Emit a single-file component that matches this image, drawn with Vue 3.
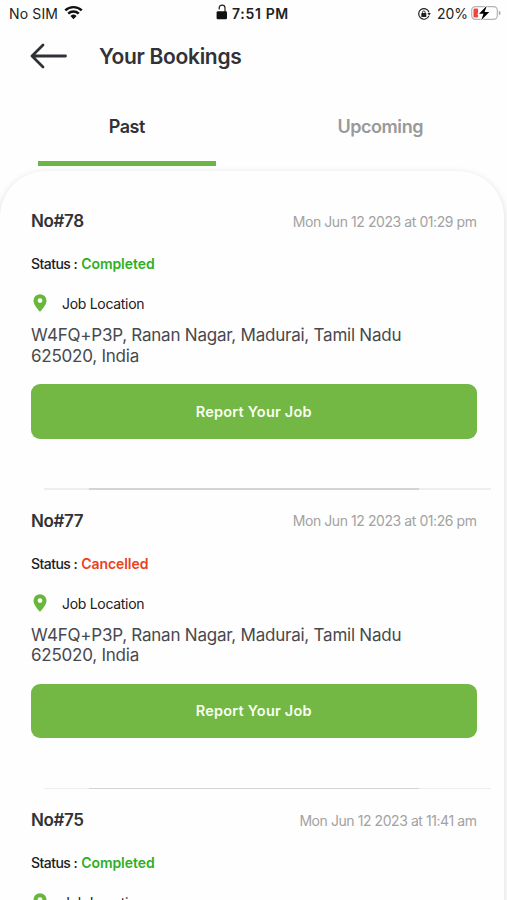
<template>
  <div class="screen">
    <div class="status-bar">
      <div class="carrier">
        <span>No SIM</span>
        <svg class="wifi" viewBox="0 0 18 14">
          <path d="M1.2 5.1a11.2 11.2 0 0 1 15.6 0M4 8.1a7.2 7.2 0 0 1 10 0" fill="none" stroke="#111" stroke-width="2.3" />
          <path d="M6.1 10.3a4.2 4.2 0 0 1 5.8 0L9 13.3z" fill="#111" />
        </svg>
      </div>
      <div class="clock">
        <svg class="lock" viewBox="0 0 12 16">
          <path d="M3.2 5.4V4a2.9 2.9 0 0 1 5.8 0v4" fill="none" stroke="#222" stroke-width="1.2" />
          <rect x="0.6" y="7.2" width="10.4" height="8" rx="1.2" fill="#111" />
        </svg>
        <span>7:51 PM</span>
      </div>
      <div class="power">
        <svg class="rotation" viewBox="0 0 14 14">
          <path d="M11.9 8.9A5.3 5.3 0 1 1 12 5.2" fill="none" stroke="#222" stroke-width="1.2" />
          <path d="M10.4 6h3.4l-1.7 2.5z" fill="#222" />
          <rect x="4.3" y="6.1" width="5" height="3.9" rx="0.6" fill="#222" />
          <path d="M5.5 6.5V5.2a1.3 1.3 0 0 1 2.6 0v1.3" fill="none" stroke="#222" stroke-width="0.9" />
        </svg>
        <span class="percent">20%</span>
        <svg class="battery" viewBox="0 0 30 16">
          <rect x="0.7" y="1.7" width="25.6" height="12.6" rx="3.6" fill="#fff" stroke="#b5b3b3" stroke-width="1.2" />
          <path d="M27.8 5.8q1.8.5 1.8 2.2t-1.8 2.2z" fill="#aaa" />
          <rect x="2.5" y="3.5" width="4.6" height="9" rx="1.2" fill="#f0453f" />
          <path d="M15.8.8 8 8.7h4.5l-2.3 6.5L18.3 7h-4.7z" fill="#000" stroke="#fff" stroke-width="1.8" paint-order="stroke" />
        </svg>
      </div>
    </div>

    <header class="header">
      <svg class="back" viewBox="0 0 38 26">
        <path d="M35.5 13H2M13 2 2 13l11 11" fill="none" stroke="#303238" stroke-width="2.8" stroke-linecap="round" stroke-linejoin="round" />
      </svg>
      <h1>Your Bookings</h1>
    </header>

    <nav class="tabs">
      <button
        v-for="tab in tabs"
        :key="tab"
        :class="['tab', { active: tab === current }]"
        @click="current = tab"
      >
        {{ tab }}
      </button>
    </nav>

    <main class="sheet">
      <article v-for="job in bookings" :key="job.no" class="booking">
        <div class="row">
          <span class="number">No#{{ job.no }}</span>
          <time>{{ job.date }}</time>
        </div>
        <div class="status">
          <span class="label">Status :</span>
          <span :class="['value', job.status.toLowerCase()]">{{ job.status }}</span>
        </div>
        <div class="location">
          <svg class="pin" viewBox="0 0 14 18">
            <path fill-rule="evenodd" d="M7 .2A6.5 6.5 0 0 0 .5 6.7C.5 11.3 7 17.8 7 17.8s6.5-6.5 6.5-11.1A6.5 6.5 0 0 0 7 .2zm0 4a2.4 2.4 0 1 1 0 4.8 2.4 2.4 0 0 1 0-4.8z" fill="#68b63c" />
          </svg>
          <span>Job Location</span>
        </div>
        <p class="address">W4FQ+P3P, Ranan Nagar, Madurai, Tamil Nadu<br />625020, India</p>
        <button class="report">Report Your Job</button>
        <div class="divider"></div>
      </article>
    </main>
  </div>
</template>

<script setup>
import { ref } from 'vue'

const tabs = ['Past', 'Upcoming']
const current = ref('Past')

const bookings = [
  { no: 78, date: 'Mon Jun 12 2023 at 01:29 pm', status: 'Completed' },
  { no: 77, date: 'Mon Jun 12 2023 at 01:26 pm', status: 'Cancelled' },
  { no: 75, date: 'Mon Jun 12 2023 at 11:41 am', status: 'Completed' },
]
</script>

<style>
body {
  margin: 0;
  background: #fefefe;
}
</style>

<style scoped>
.screen {
  height: 900px;
  overflow: hidden;
  display: flex;
  flex-direction: column;
  background: #fefefe;
  font-family: Inter, 'Liberation Sans', sans-serif;
  color: #303238;
}

button {
  font-family: inherit;
  border: none;
  padding: 0;
  cursor: pointer;
}

svg {
  flex: none;
}

/* STATUS BAR */
.status-bar {
  height: 27px;
  flex: none;
  display: grid;
  grid-template-columns: 1fr auto 1fr;
  align-items: center;
  padding: 0 6px 0 9px;
  box-sizing: border-box;
  font-size: 14px;
  color: #222;
}
.carrier,
.clock,
.power {
  display: flex;
  align-items: center;
  white-space: nowrap;
}
.carrier {
  gap: 6px;
  letter-spacing: 0.15px;
}
.wifi {
  width: 19px;
  height: 15px;
  margin-top: -2px;
}
.clock {
  gap: 4px;
  margin-right: 3px;
  font-weight: 600;
  letter-spacing: 0.65px;
  transform: translateX(-1px);
}
.lock {
  width: 12px;
  height: 16px;
  margin-top: -4px;
}
.power {
  justify-content: flex-end;
}
.rotation {
  width: 14px;
  height: 14px;
  margin-right: 6px;
}
.battery {
  width: 30px;
  height: 16px;
  margin: -2px 0 0 3px;
}

/* HEADER */
.header {
  height: 58px;
  flex: none;
  display: flex;
  align-items: center;
  padding-left: 31px;
}
.back {
  width: 38px;
  height: 26px;
  margin: 0 30px 0 -1px;
}
h1 {
  margin: 0 0 0 1px;
  font-size: 21px;
  font-weight: 600;
  letter-spacing: -0.32px;
}

/* TABS */
.tabs {
  height: 81px;
  flex: none;
  display: flex;
  padding-bottom: 5px;
}
.tab {
  flex: 1;
  position: relative;
  padding-top: 2px;
  background: none;
  font-size: 18px;
  font-weight: 600;
  letter-spacing: -0.45px;
  color: #999;
}
.tab.active {
  color: #303238;
}
.tab.active::after {
  content: '';
  position: absolute;
  left: 38px;
  right: 37.5px;
  bottom: 0;
  height: 5px;
  background: #6cb644;
}

/* BOOKINGS */
.sheet {
  flex: none;
  width: 504px;
  box-sizing: border-box;
  padding: 30px 0 0 31px;
  border-radius: 46px 46px 0 0;
  background: #fefefe;
  box-shadow: 0 2px 7px rgba(0, 0, 0, 0.15);
}
.booking {
  height: 299.5px;
  width: 445.5px;
}
.row {
  height: 40px;
  display: flex;
  align-items: center;
  justify-content: space-between;
}
.number {
  font-size: 17px;
  font-weight: 600;
  letter-spacing: -0.4px;
}
time {
  font-size: 14px;
  letter-spacing: -0.43px;
  color: #a2a2a2;
}
.status {
  height: 20px;
  margin-top: 12.5px;
  display: flex;
  align-items: center;
  gap: 4px;
  font-size: 14px;
  font-weight: 500;
  color: #202024;
}
.label {
  letter-spacing: -0.55px;
}
.value {
  font-weight: 600;
  letter-spacing: -0.05px;
}
.completed {
  color: #2daf24;
}
.cancelled {
  color: #e8431d;
}
.location {
  height: 20px;
  margin-top: 20px;
  display: flex;
  align-items: center;
  padding-left: 2px;
  font-size: 14px;
  letter-spacing: -0.3px;
  color: #202024;
}
.pin {
  width: 14px;
  height: 18px;
  margin: -1px 15px 0 0;
}
.address {
  margin: 11.5px 0 0;
  font-size: 17px;
  line-height: 20.5px;
  letter-spacing: -0.23px;
  white-space: nowrap;
  color: #48494e;
}
.report {
  display: block;
  width: 445.5px;
  height: 54.5px;
  margin-top: 18px;
  border-radius: 9px;
  background: #73b744;
  color: #f8fff2;
  font-size: 14.5px;
  font-weight: 600;
  letter-spacing: 0.2px;
}
.divider {
  width: 447px;
  height: 1.5px;
  margin: 49.5px 0 0 13px;
  background: linear-gradient(90deg, #eee 45px, #d4d4d6 45px, #d4d4d6 375px, #eee 375px);
}
</style>
